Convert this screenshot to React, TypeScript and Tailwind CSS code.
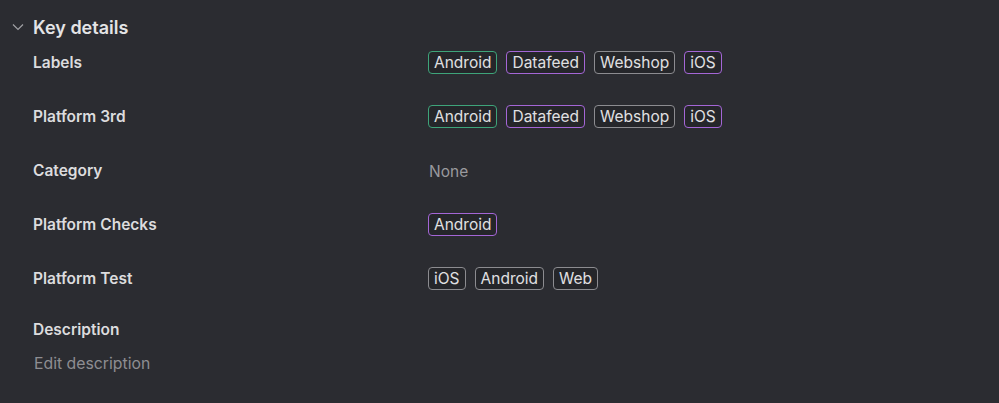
import React from "react";

type Tag = { t: string; c: "green" | "purple" | "gray" };

const border: Record<string, string> = {
  green: "border-[#3ea47a]",
  purple: "border-[#a466d6]",
  gray: "border-[#8c8c90]",
};

function Badge({ t, c }: Tag) {
  return (
    <span
      className={`inline-flex h-[23px] items-center rounded-[4px] border ${border[c]} bg-[#25262a] px-[5px] text-[15.5px] leading-none text-[#e0e0e2]`}
    >
      {t}
    </span>
  );
}

const rows: { label: string; tags?: Tag[]; none?: boolean }[] = [
  {
    label: "Labels",
    tags: [
      { t: "Android", c: "green" },
      { t: "Datafeed", c: "purple" },
      { t: "Webshop", c: "gray" },
      { t: "iOS", c: "purple" },
    ],
  },
  {
    label: "Platform 3rd",
    tags: [
      { t: "Android", c: "green" },
      { t: "Datafeed", c: "purple" },
      { t: "Webshop", c: "gray" },
      { t: "iOS", c: "purple" },
    ],
  },
  { label: "Category", none: true },
  { label: "Platform Checks", tags: [{ t: "Android", c: "purple" }] },
  {
    label: "Platform Test",
    tags: [
      { t: "iOS", c: "gray" },
      { t: "Android", c: "gray" },
      { t: "Web", c: "gray" },
    ],
  },
];

export default function App() {
  return (
    <div
      className="h-[403px] w-[999px] overflow-hidden bg-[#2b2c31] text-[#dcdcde]"
      style={{ fontFamily: "Inter, 'Noto Sans', sans-serif" }}
    >
      <div className="flex h-[53px] items-center pt-[1px]">
        <div className="flex w-[33px] justify-center pl-[2px]">
          <svg width="12" height="8" viewBox="0 0 12 8" fill="none">
            <path d="M1 1.5 L6 6.5 L11 1.5" stroke="#a0a0a4" strokeWidth="1.2" />
          </svg>
        </div>
        <span className="text-[18px] font-semibold text-[#e4e4e6]">Key details</span>
      </div>
      <div className="flex flex-col">
        {rows.map((r) => (
          <div key={r.label} className="flex h-[54px] items-start">
            <div className="w-[428px] pl-[33px] text-[15.5px] font-semibold leading-[20px] text-[#dcdcde]">
              {r.label}
            </div>
            <div className="flex gap-[9px] -mt-[2px]">
              {r.none ? (
                <span className="pl-[1px] pt-[3px] text-[15.5px] leading-[20px] text-[#9a9a9e]">None</span>
              ) : (
                r.tags!.map((tg, i) => <Badge key={i} {...tg} />)
              )}
            </div>
          </div>
        ))}
      </div>
      <div className="-mt-[3px] pl-[33px] text-[15.5px] font-semibold leading-[20px] text-[#dcdcde]">
        Description
      </div>
      <div className="mt-[14px] pl-[34px] text-[15.8px] leading-[20px] text-[#8e8e92]">
        Edit description
      </div>
    </div>
  );
}
